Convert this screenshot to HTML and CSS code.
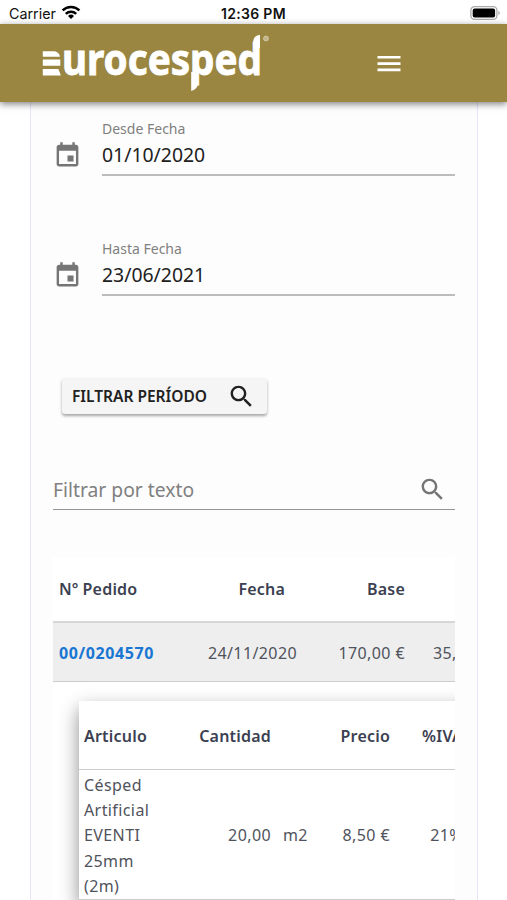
FILE: index.html
```html
<!DOCTYPE html>
<html lang="es">
<head>
  <meta charset="UTF-8" />
  <meta name="viewport" content="width=device-width, initial-scale=1.0" />
  <title>Eurocesped - Pedidos</title>
  <link rel="stylesheet" href="styles.css">
</head>
<body>
  <div class="status-bar">
    <div class="carrier">
      <span>Carrier</span>
      <svg width="20" height="15" viewBox="0 0 20 15" fill="none" stroke="#000" stroke-width="2.5">
        <path d="M1.6 5.4a12 12 0 0 1 16.8 0" />
        <path d="M4.8 8.8a7.4 7.4 0 0 1 10.4 0" />
        <path d="M10 14l-3-3.1a4.3 4.3 0 0 1 6 0z" fill="#000" stroke="none" />
      </svg>
    </div>
    <div class="clock">12:36 PM</div>
    <svg class="battery" width="31" height="14" viewBox="0 0 31 14">
      <rect x=".9" y=".7" width="26" height="12.6" rx="3.6" fill="#fff" stroke="#aaa" stroke-width="1.3" />
      <rect x="2.7" y="2.5" width="22.4" height="9" rx="2" />
      <path d="M28.4 4.8q3 2.2 0 4.4z" fill="#aaa" />
    </svg>
  </div>

  <header class="toolbar">
    <svg class="logo" width="230" height="62" viewBox="0 0 230 62" fill="#fff">
      <path d="M.8 17.200h12q4.500 1 5.200 5.600H.8zM.8 25.600h17.500v6.200H.8zM.8 35h15.500q1.500 3 2.500 6.500H.8z" />
      <text class="logo-text" x="20" y="41" textLength="200" lengthAdjust="spacingAndGlyphs">urocesped</text>
      <path d="M149.200 38h6.500v13q-1 4.500-6.500 6zM211.400 14V6q1-4.500 6.600-5v13z" />
      <circle cx="224" cy="4.500" r="2.500" fill="#c3b68b" stroke="#d5cbab" stroke-width=".8" />
    </svg>
    <button class="menu-btn" aria-label="Menu">
      <svg width="24" height="18" viewBox="0 0 24 18" fill="#fff">
        <path d="M.5 1h23v2.600H.5zM.5 7.300h23v2.600H.5zM.5 13.600h23v2.600H.5z" />
      </svg>
    </button>
  </header>

  <main class="card">
    <div class="date-field">
      <svg class="icon" viewBox="0 0 24 24"><path d="M17 12h-5v5h5v-5zM16 1v2H8V1H6v2H5c-1.110 0-1.990.9-1.990 2L3 19c0 1.100.89 2 2 2h14c1.100 0 2-.9 2-2V5c0-1.100-.9-2-2-2h-1V1h-2zm3 18H5V8h14v11z" /></svg>
      <div class="field">
        <label for="desde">Desde Fecha</label>
        <input type="text" id="desde" value="01/10/2020" />
      </div>
    </div>
    <div class="date-field">
      <svg class="icon" viewBox="0 0 24 24"><path d="M17 12h-5v5h5v-5zM16 1v2H8V1H6v2H5c-1.110 0-1.990.9-1.990 2L3 19c0 1.100.89 2 2 2h14c1.100 0 2-.9 2-2V5c0-1.100-.9-2-2-2h-1V1h-2zm3 18H5V8h14v11z" /></svg>
      <div class="field">
        <label for="hasta">Hasta Fecha</label>
        <input type="text" id="hasta" value="23/06/2021" />
      </div>
    </div>

    <button class="btn">
      <span>FILTRAR PERÍODO</span>
      <svg class="icon" viewBox="0 0 24 24"><path d="M15.500 14h-.79l-.28-.27C15.410 12.590 16 11.110 16 9.500 16 5.910 13.090 3 9.500 3S3 5.910 3 9.500 5.910 16 9.500 16c1.610 0 3.090-.59 4.230-1.570l.27.28v.79l5 4.990L20.490 19l-4.990-5zm-6 0C7.010 14 5 11.990 5 9.500S7.010 5 9.500 5 14 7.010 14 9.500 11.990 14 9.500 14z" /></svg>
    </button>

    <div class="search">
      <input type="text" placeholder="Filtrar por texto" />
      <svg class="icon" viewBox="0 0 24 24"><path d="M15.500 14h-.79l-.28-.27C15.410 12.590 16 11.110 16 9.500 16 5.910 13.090 3 9.500 3S3 5.910 3 9.500 5.910 16 9.500 16c1.610 0 3.090-.59 4.230-1.570l.27.28v.79l5 4.990L20.490 19l-4.990-5zm-6 0C7.010 14 5 11.990 5 9.500S7.010 5 9.500 5 14 7.010 14 9.500 11.990 14 9.500 14z" /></svg>
    </div>

    <div class="table-wrap">
      <table class="orders">
        <colgroup>
          <col class="w-order"><col class="w-date"><col class="w-base"><col class="w-tax"><col>
        </colgroup>
        <tr class="head">
          <th class="left">Nº Pedido</th>
          <th class="sortable">Fecha</th>
          <th>Base</th>
          <th></th>
          <th></th>
        </tr>
        <tr class="order">
          <td class="left"><a href="#">00/0204570</a></td>
          <td>24/11/2020</td>
          <td>170,00 €</td>
          <td>35,70 €</td>
          <td></td>
        </tr>
        <tr>
          <td class="detail" colspan="5">
            <table class="lines">
              <colgroup>
                <col class="w-item"><col class="w-qty"><col class="w-unit"><col class="w-price"><col class="w-vat"><col>
              </colgroup>
              <tr class="head">
                <th class="left">Articulo</th>
                <th>Cantidad</th>
                <th></th>
                <th>Precio</th>
                <th>%IVA</th>
                <th></th>
              </tr>
              <tr class="line">
                <td class="left">Césped Artificial EVENTI 25mm (2m)</td>
                <td>20,00</td>
                <td class="unit">m2</td>
                <td>8,50 €</td>
                <td>21%</td>
                <td></td>
              </tr>
            </table>
          </td>
        </tr>
      </table>
    </div>
  </main>
</body>
</html>
```

FILE: styles.css
```css
* {
  box-sizing: border-box;
}
body {
  margin: 0;
  height: 900px;
  overflow: hidden;
  display: flex;
  flex-direction: column;
  background: #fff;
  font-family: 'Noto Sans', sans-serif;
  color: #212121;
}
input, button {
  font-family: inherit;
  border: none;
  padding: 0;
  background: none;
  outline: none;
}
.status-bar {
  flex: none;
  height: 24px;
  padding: 3px 6px 0 9px;
  display: grid;
  grid-template-columns: 1fr auto 1fr;
  align-items: center;
  font-family: Inter, sans-serif;
  font-size: 14.3px;
  color: #111;
}
.carrier {
  display: flex;
  align-items: center;
  gap: 5px;
}
.carrier svg {
  margin-top: -2px;
}
.clock {
  margin-right: 3px;
  font-weight: 600;
  font-size: 14px;
  letter-spacing: 0.3px;
}
.battery {
  justify-self: end;
  margin-top: -1px;
}
.toolbar {
  flex: none;
  position: relative;
  z-index: 1;
  height: 78px;
  padding-left: 42px;
  display: flex;
  align-items: flex-start;
  background: #9a8641;
  box-shadow: 0 2px 7px rgba(0,0,0,0.5);
}
.logo {
  margin-top: 10px;
}
.logo-text {
  font-size: 43px;
  font-weight: 700;
  stroke: #fff;
  stroke-width: 0.9px;
}
.menu-btn {
  margin: 31px 0 0 105px;
  height: 18px;
}
.card {
  flex: 1;
  min-height: 0;
  margin: 0 29px 0 30px;
  padding: 16px 22px 0;
  border: solid #e6e6fa;
  border-width: 0 1px;
  background: #fdfdfd;
  overflow: hidden;
}
.icon {
  width: 29px;
  height: 29px;
  fill: #757575;
}
.date-field {
  height: 120px;
  display: flex;
  align-items: flex-start;
  gap: 20px;
}
.date-field .icon {
  margin-top: 23px;
}
.field {
  flex: 1;
  height: 58px;
  border-bottom: 2px solid #bdbdbd;
}
.field label {
  display: block;
  font-size: 14px;
  line-height: 22px;
  color: #808080;
}
.field input {
  display: block;
  width: 100%;
  height: 29px;
  font-size: 19.4px;
  color: #212121;
}
.btn {
  width: 205px;
  height: 36px;
  margin: 20px 0 0 9px;
  padding: 0 11px 0 10px;
  display: flex;
  align-items: center;
  justify-content: space-between;
  border-radius: 3px;
  background: #f5f5f5;
  box-shadow: 0 2px 3px rgba(0,0,0,0.35);
  color: #212121;
  font-size: 15.5px;
  font-weight: 600;
}
.btn .icon {
  fill: #212121;
}
.search {
  height: 41px;
  margin-top: 55px;
  padding-right: 8px;
  display: flex;
  align-items: center;
  border-bottom: 1px solid #949494;
}
.search input {
  flex: 1;
  font-size: 19.3px;
}
.search input::placeholder {
  color: #808080;
}
.table-wrap {
  height: 343px;
  margin-top: 47px;
  overflow: hidden;
  background: #fff;
}
table {
  table-layout: fixed;
  border-collapse: separate;
  border-spacing: 0;
  font-size: 16px;
  letter-spacing: 0.4px;
  color: #50535c;
}
.orders {
  width: 520px;
}
.w-order { width: 140px; }
.w-date { width: 110px; }
.w-base { width: 108px; }
.w-tax { width: 85px; }
th, td {
  padding: 0 6px 0 0;
  text-align: right;
  border-bottom: 1px solid #ccc;
}
th {
  font-weight: 600;
  letter-spacing: 0.2px;
  color: #3c4152;
}
.left {
  padding-left: 6px;
  text-align: left;
}
.head .sortable {
  padding-right: 18px;
}
.orders .head {
  height: 66px;
}
.orders > tbody > .head th {
  border-bottom: 2px solid #d6d6d6;
}
.order {
  height: 59px;
  background: #eee;
}
.order td {
  padding-top: 1px;
}
.order a {
  font-weight: 700;
  color: #1976d2;
  text-decoration: none;
  letter-spacing: 0.6px;
}
.orders .detail {
  padding: 19px 0 0 26px;
  border-bottom: none;
}
.lines {
  width: 494px;
  background: #fff;
  box-shadow: 0 8px 18px rgba(0,0,0,0.45);
}
.lines .left {
  padding-left: 5px;
}
.w-item { width: 88px; }
.w-qty { width: 110px; }
.w-unit { width: 42px; }
.w-price { width: 77px; }
.w-vat { width: 73px; }
.lines .head {
  height: 69px;
}
.lines .head th {
  padding-top: 2px;
}
.line td {
  padding-top: 3px;
  line-height: 25.2px;
}
.line .unit {
  padding-left: 6px;
  text-align: left;
}
```
